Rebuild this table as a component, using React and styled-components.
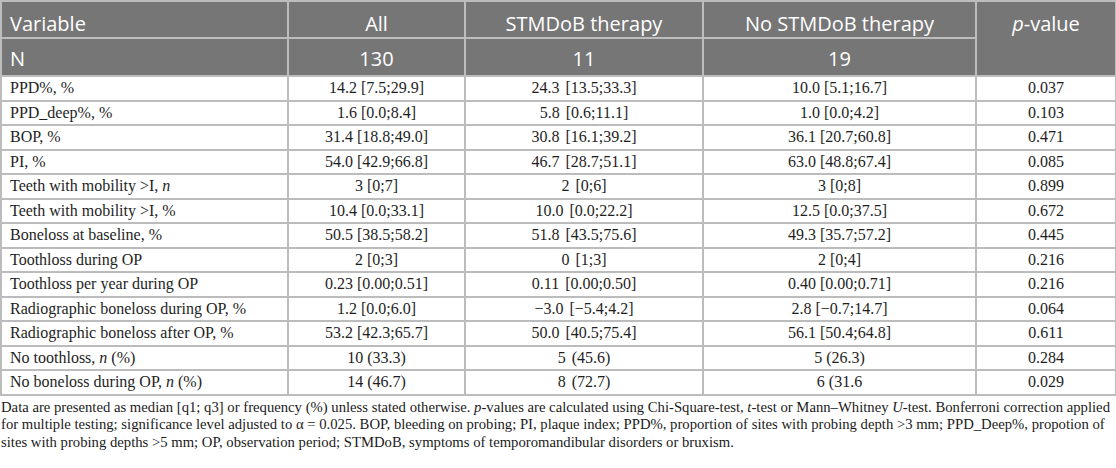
import React from "react";
import styled, { createGlobalStyle } from "styled-components";

const Global = createGlobalStyle`
  html, body { margin: 0; padding: 0; background: #fff; }
  body { width: 1116px; height: 468px; overflow: hidden; }
`;

const Wrap = styled.div`
  width: 1116px;
  display: flex;
  flex-direction: column;
`;

const Table = styled.table`
  width: 1115px;
  border-collapse: collapse;
  table-layout: fixed;
  border: 2px solid #b9b9b9;
`;

const HeadCell = styled.th`
  background: #767676;
  color: #fff;
  font-family: "Open Sans", "Noto Sans", sans-serif;
  font-weight: 400;
  font-size: 20px;
  line-height: 24px;
  height: ${(p) => p.$h || 35}px;
  padding: ${(p) => p.$pt || 8}px 8px 0;
  text-align: ${(p) => (p.$left ? "left" : "center")};
  vertical-align: top;
  border: 2px solid #bdbdbd;
  box-sizing: border-box;
  white-space: nowrap;
`;

const Cell = styled.td`
  font-family: "Liberation Serif", "Times New Roman", serif;
  font-size: 16px;
  color: #1e1e1e;
  height: 24.5px;
  padding: 0 8px;
  text-align: ${(p) => (p.$left ? "left" : "center")};
  vertical-align: middle;
  border: 2px solid #bcbcbc;
  box-sizing: border-box;
  white-space: nowrap;
  word-spacing: ${(p) => (p.$wide ? "2px" : "0")};
`;

const Note = styled.p`
  margin: 3px 0 0 1px;
  font-family: "Liberation Serif", "Times New Roman", serif;
  font-size: 14.7px;
  line-height: 17.5px;
  color: #1a1a1a;
  white-space: nowrap;
`;

const I = styled.i`
  font-style: italic;
`;

const rows = [
  ["PPD%, %", "14.2 [7.5;29.9]", "24.3 [13.5;33.3]", "10.0 [5.1;16.7]", "0.037"],
  ["PPD_deep%, %", "1.6 [0.0;8.4]", "5.8 [0.6;11.1]", "1.0 [0.0;4.2]", "0.103"],
  ["BOP, %", "31.4 [18.8;49.0]", "30.8 [16.1;39.2]", "36.1 [20.7;60.8]", "0.471"],
  ["PI, %", "54.0 [42.9;66.8]", "46.7 [28.7;51.1]", "63.0 [48.8;67.4]", "0.085"],
  [<>Teeth with mobility &gt;I, <I>n</I></>, "3 [0;7]", "2 [0;6]", "3 [0;8]", "0.899"],
  ["Teeth with mobility >I, %", "10.4 [0.0;33.1]", "10.0 [0.0;22.2]", "12.5 [0.0;37.5]", "0.672"],
  ["Boneloss at baseline, %", "50.5 [38.5;58.2]", "51.8 [43.5;75.6]", "49.3 [35.7;57.2]", "0.445"],
  ["Toothloss during OP", "2 [0;3]", "0 [1;3]", "2 [0;4]", "0.216"],
  ["Toothloss per year during OP", "0.23 [0.00;0.51]", "0.11 [0.00;0.50]", "0.40 [0.00;0.71]", "0.216"],
  ["Radiographic boneloss during OP, %", "1.2 [0.0;6.0]", "\u22123.0 [\u22125.4;4.2]", "2.8 [\u22120.7;14.7]", "0.064"],
  ["Radiographic boneloss after OP, %", "53.2 [42.3;65.7]", "50.0 [40.5;75.4]", "56.1 [50.4;64.8]", "0.611"],
  [<>No toothloss, <I>n</I> (%)</>, "10 (33.3)", "5 (45.6)", "5 (26.3)", "0.284"],
  [<>No boneloss during OP, <I>n</I> (%)</>, "14 (46.7)", "8 (72.7)", "6 (31.6", "0.029"],
];

export default function App() {
  return (
    <Wrap>
      <Global />
      <Table>
        <colgroup>
          <col style={{ width: 287 }} />
          <col style={{ width: 177 }} />
          <col style={{ width: 238 }} />
          <col style={{ width: 273 }} />
          <col style={{ width: 140 }} />
        </colgroup>
        <thead>
          <tr>
            <HeadCell $left $h={37} $pt={10}>Variable</HeadCell>
            <HeadCell $h={37} $pt={10}>All</HeadCell>
            <HeadCell $h={37} $pt={10}>STMDoB therapy</HeadCell>
            <HeadCell $h={37} $pt={10}>No STMDoB therapy</HeadCell>
            <HeadCell rowSpan={2} $pt={10}>
              <I>p</I>-value
            </HeadCell>
          </tr>
          <tr>
            <HeadCell $left $h={38}>N</HeadCell>
            <HeadCell $h={38}>130</HeadCell>
            <HeadCell $h={38}>11</HeadCell>
            <HeadCell $h={38}>19</HeadCell>
          </tr>
        </thead>
        <tbody>
          {rows.map((r, i) => (
            <tr key={i}>
              <Cell $left>{r[0]}</Cell>
              <Cell>{r[1]}</Cell>
              <Cell $wide>{r[2]}</Cell>
              <Cell>{r[3]}</Cell>
              <Cell>{r[4]}</Cell>
            </tr>
          ))}
        </tbody>
      </Table>
      <Note>
        Data are presented as median [q1; q3] or frequency (%) unless stated otherwise. <I>p</I>-values are calculated using
        Chi-Square-test, <I>t</I>-test or Mann–Whitney <I>U</I>-test. Bonferroni correction applied
        <br />
        for multiple testing; significance level adjusted to α = 0.025. BOP, bleeding on probing; PI, plaque index; PPD%,
        proportion of sites with probing depth &gt;3 mm; PPD_Deep%, propotion of
        <br />
        sites with probing depths &gt;5 mm; OP, observation period; STMDoB, symptoms of temporomandibular disorders or
        bruxism.
      </Note>
    </Wrap>
  );
}
